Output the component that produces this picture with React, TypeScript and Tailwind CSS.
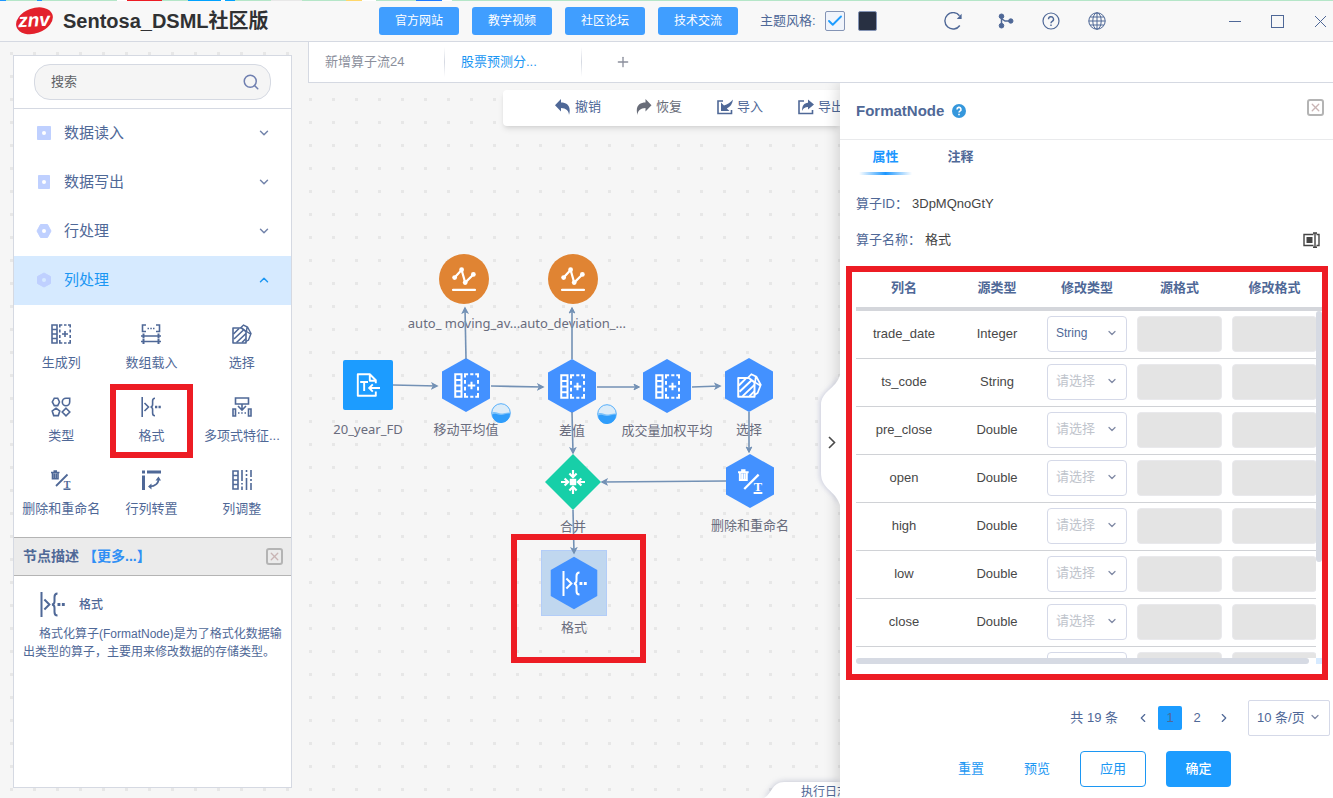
import { useState } from "react";
import type { ReactNode } from "react";
import { Check, ChevronDown, ChevronLeft, ChevronRight, ChevronUp, Plus, Search as SearchIcon, X } from "lucide-react";

/* ---------- operator icons, all on a 20x20 grid ---------- */

function Glyph({ children, className = "w-5 h-5" }: { children: ReactNode; className?: string }) {
  return (
    <svg viewBox="0 0 20 20" className={className} fill="none" stroke="currentColor" strokeWidth="1.6">
      {children}
    </svg>
  );
}

function GenColumn({ className }: { className?: string }) {
  return (
    <Glyph className={className}>
      <path d="M1 1h5v18H1zM1 5.5h5M1 10h5M1 14.5h5" />
      <path d="M8.8 3.5V1h2.5M13 1h2.5M17 1h2.200v2.5M8.800 5.500v3M8.800 11v3M19.200 5.500v3M19.200 11v3M8.800 16v3h2.500M13 19h2.500M17 19h2.200v-3" />
      <path d="M11 10h6M14 7v6" />
    </Glyph>
  );
}

function ArrayLoad() {
  return (
    <Glyph>
      <path d="M5 1H1.5v6.5H5M15 1h3.5v6.5H15" />
      <path d="M6.500 4.500H8M9.300 4.500h1.500M12 4.500h1.500" />
      <path d="M0 12h20M0 17.500h20" />
      <path d="M2.500 9.500v5M17.500 9.500v5M2.500 15v5M17.500 15v5" strokeWidth="2" />
    </Glyph>
  );
}

function SelectIcon({ className }: { className?: string }) {
  return (
    <Glyph className={className}>
      <path d="M1 4h8.500L14 7.500V19H1z" strokeLinejoin="round" />
      <path d="M1.500 10L7 4.500M2 15L11.500 6M4.500 18.500L14 9.500M10 18.500l4-4" />
      <path d="M8.500 4l3-3L15.500 3l3.500 6.500-2.500 6.500-2.500 1.500M15 3l-.5 4.500 4 2.500" strokeWidth="1.4" />
    </Glyph>
  );
}

function TypeIcon() {
  return (
    <Glyph>
      <path d="M3.3 1.2h3.400L8.500 5 6.700 8.600H3.300L1.300 5z" />
      <path d="M15 1.300h3.700V5A3.700 3.700 0 1 1 15 1.300z" />
      <path d="M5 11.200l3.800 2.900-1.500 4.500H2.700l-1.500-4.500z" />
      <path d="M15 11.200l3.800 3.800-3.800 3.800-3.800-3.800z" />
    </Glyph>
  );
}

function FormatIcon({ className }: { className?: string }) {
  return (
    <Glyph className={className}>
      <path d="M1.200 0v20M3.500 6l4 4-4 4" />
      <path d="M14 1.200c-2 0-2.400 1-2.400 2.800v3.500c0 1.500-.6 2.300-2 2.500 1.400.2 2 1 2 2.500V16c0 1.800.4 2.800 2.400 2.800" />
      <path d="M14 10h2.300M17.500 10h2.300" strokeWidth="2.400" />
    </Glyph>
  );
}

function Polynomial() {
  return (
    <Glyph>
      <path d="M3.500 1h13v6h-13z" />
      <path d="M10 7v5M6 9l4 4 4-4" />
      <path d="M1 12h2.500v7H1zM16.500 12H19v7h-2.500z" />
      <path d="M6 16h1.500M9.200 16h1.500M12.500 16H14" />
    </Glyph>
  );
}

function DeleteRename({ className }: { className?: string }) {
  return (
    <Glyph className={className}>
      <path d="M0 2.500h8.500M2.500 1h3.500M1.500 3v5.700h5.500V3M3.300 3.500v5M5.200 3.500v5" />
      <path d="M5 16L16.500 4.500" strokeWidth="1.800" />
      <path d="M12.500 19.200h7" />
      <text
        x="16"
        y="17.5"
        textAnchor="middle"
        fontSize="10"
        fontWeight="700"
        fill="currentColor"
        stroke="none"
        className="font-['Liberation_Serif',serif]"
      >
        T
      </text>
    </Glyph>
  );
}

function Transpose() {
  return (
    <Glyph>
      <path d="M1 2h3M6 2h14" strokeWidth="3" />
      <path d="M2.500 5.500V20" strokeWidth="3" />
      <path d="M17.500 8.500c.5 4.500-3 8-9 8" />
      <path d="M14.500 10.500l3-4 2.500 4zM10.500 13.500L7 16.500l3.500 3z" fill="currentColor" stroke="none" />
    </Glyph>
  );
}

function ColumnAdjust() {
  return (
    <Glyph>
      <path d="M1 1h5v18H1zM1 5.500h5M1 10h5M1 14.500h5" />
      <path d="M10 0v11M10 13v1.500M10 16.500V20M14.500 0v2M14.500 4v2M14.500 8v12M19 0v7M19 9v2M19 13v7" />
    </Glyph>
  );
}

function ChartIcon({ className }: { className?: string }) {
  return (
    <Glyph className={className}>
      <path d="M2 9l6-6.500L11 13l7-7" strokeWidth="1.800" />
      <path d="M.8 19h18.400" strokeWidth="1.800" strokeLinecap="round" />
      <g fill="currentColor" stroke="none">
        <circle cx="2.200" cy="8.800" r="2" />
        <circle cx="8" cy="2.300" r="2" />
        <circle cx="11" cy="13" r="2" />
        <circle cx="17.800" cy="6.200" r="2" />
      </g>
    </Glyph>
  );
}

function FileImport({ className }: { className?: string }) {
  return (
    <Glyph className={className}>
      <path d="M16.500 8.500V6l-5-5H1.500v18h15v-3.500M11.500 1v5.500H17" strokeLinejoin="round" />
      <path d="M3.500 7.500h6.500M6.800 7.500V15M20 12.500h-9M14 9.500l-3 3 3 3" />
    </Glyph>
  );
}

function MergeIcon({ className }: { className?: string }) {
  return (
    <Glyph className={className}>
      <path d="M7.300 7.300h5.400v5.400H7.300z" fill="currentColor" stroke="none" />
      <path d="M0 10h5.500M20 10h-5.500M10 0v5.500M10 20v-5.500" strokeWidth="1.800" />
      <path d="M3 7l3 3-3 3M17 7l-3 3 3 3M7 3l3 3 3-3M7 17l3-3 3 3" strokeWidth="1.800" />
    </Glyph>
  );
}

function CloseBox() {
  return (
    <button aria-label="关闭" className="w-[17px] h-[17px] flex items-center justify-center border-2 border-[#b4b4b4] rounded-[3px]">
      <X className="w-[13px] h-[13px] shrink-0 text-[#c9b4b4]" strokeWidth={2.5} />
    </button>
  );
}

/* ---------- header ---------- */

// sliver of the window behind the app
const strip = [
  "w-[6px] bg-[#1e96ff]",
  "w-[31px] bg-[#b5e6c8]",
  "w-[5px] bg-[#1e96ff]",
  "w-[75px] bg-[#b5e6c8]",
  "w-[10px] bg-white",
  "w-[35px] bg-[#ed1c24]",
  "w-[26px] bg-[#b5e6c8]",
  "w-[33px] bg-[#00a2ff]",
  "w-[4px] bg-white",
  "w-[10px] bg-[#00a2ff]",
  "w-[36px] bg-[#b5e6c8]",
  "w-[31px] bg-[#e8e8e8]",
  "w-[44px] bg-[#b5e6c8]",
  "w-[16px] bg-[#ffd76a]",
  "w-[14px] bg-white",
  "w-[40px] bg-[#b5e6c8]",
  "w-[26px] bg-[#1e7bff]",
  "w-[10px] bg-white",
  "flex-1 bg-[#b5e6c8]",
];

function Logo() {
  return (
    <svg viewBox="0 0 40 32" className="w-10 h-8" aria-label="znv">
      <ellipse cx="20.500" cy="16" rx="19" ry="12.500" fill="#e3212c" transform="rotate(-20 20 16)" />
      <text
        x="20"
        y="21.500"
        textAnchor="middle"
        fontSize="19"
        fontWeight="700"
        fontStyle="italic"
        fill="#fff"
        transform="rotate(-3 20 16)"
      >
        znv
      </text>
    </svg>
  );
}

const links = ["官方网站", "教学视频", "社区论坛", "技术交流"];

function Header() {
  return (
    <header className="shrink-0 bg-[#f8f8f8] border-b border-[#d5d9e2] text-[#4f6897]">
      <div className="flex h-px">
        {strip.map((s, i) => (
          <i key={i} className={s} />
        ))}
      </div>
      <div className="flex items-center h-10 pl-[14px] pr-[6px]">
        <Logo />
        <h1 className="w-[316px] ml-[9px] text-xl font-bold text-[#303133] whitespace-nowrap">Sentosa_DSML社区版</h1>
        <nav className="flex gap-[13px]">
          {links.map((l) => (
            <button key={l} className="w-20 h-7 rounded-[3px] bg-[#409eff] text-white text-xs">
              {l}
            </button>
          ))}
        </nav>
        <span className="ml-[22px] text-[13px]">主题风格:</span>
        <label className="relative ml-[9px] w-5 h-5">
          <input
            type="checkbox"
            defaultChecked
            aria-label="浅色"
            className="block appearance-none w-5 h-5 border border-[#8494b5] rounded-xs bg-[#f0f4fb]"
          />
          <Check className="absolute inset-0 m-auto w-[18px] h-[18px] text-[#1c9cff] pointer-events-none" strokeWidth={2.5} />
        </label>
        <button aria-label="深色" className="ml-[13px] w-[19px] h-5 rounded-xs border border-[#8494b5] bg-[#283042]" />
        <div className="flex items-center gap-7 ml-[67px]">
          <button aria-label="刷新">
            <svg viewBox="0 0 18 18" className="w-[18px] h-[18px]" fill="none" stroke="currentColor" strokeWidth="1.4">
              <path d="M15.500 3.700A8.200 8.200 0 1 0 15.800 13.500" />
              <path d="M17.600 1.800v5.200h-4.800z" fill="currentColor" stroke="none" />
            </svg>
          </button>
          <button aria-label="分支" className="ml-2">
            <svg viewBox="0 0 16 16" className="w-4 h-4" fill="currentColor" stroke="currentColor">
              <path d="M3.500 3.500v9M4 6l3 2h6" fill="none" strokeWidth="1.5" />
              <circle cx="3.500" cy="3.300" r="2.300" />
              <circle cx="3.500" cy="12.700" r="2.300" />
              <circle cx="12.800" cy="8" r="2.200" />
            </svg>
          </button>
          <button aria-label="帮助">
            <svg viewBox="0 0 18 18" className="w-[18px] h-[18px]" fill="none" stroke="currentColor" strokeWidth="1.2">
              <circle cx="9" cy="9" r="8" />
              <path d="M6.500 7.200a2.500 2.500 0 1 1 3.700 2.200C9.300 9.900 9 10.300 9 11.300M9 12.600v1.400" strokeWidth="1.4" />
            </svg>
          </button>
          <button aria-label="语言">
            <svg viewBox="0 0 18 18" className="w-[18px] h-[18px]" fill="none" stroke="currentColor">
              <circle cx="9" cy="9" r="8.200" />
              <ellipse cx="9" cy="9" rx="4.200" ry="8.200" />
              <path d="M9 .8v16.400M.8 9h16.400M2 5h14M2 13h14" />
            </svg>
          </button>
        </div>
        <div className="flex items-center gap-[30px] ml-auto">
          <button aria-label="最小化" className="w-3 h-px bg-[#4f6897]" />
          <button aria-label="最大化" className="w-[13px] h-[13px] border border-[#4f6897]" />
          <button aria-label="关闭窗口">
            <svg viewBox="0 0 13 13" className="w-[13px] h-[13px]" stroke="currentColor">
              <path d="M1 1l11 11M12 1L1 12" />
            </svg>
          </button>
        </div>
      </div>
    </header>
  );
}

/* ---------- left palette ---------- */

const groups = [
  { name: "数据读入", shape: "M1.500 1.500h13v13h-13z" },
  { name: "数据写出", shape: "M2.500 1.500h11v13h-11z" },
  { name: "行处理", shape: "M4.500 1.500h7L15 8l-3.500 6.500h-7L1 8z" },
  { name: "列处理", shape: "M8 1l6.500 3.500v7L8 15l-6.500-3.500v-7z" },
];

const operators = [
  { name: "生成列", icon: <GenColumn /> },
  { name: "数组载入", icon: <ArrayLoad /> },
  { name: "选择", icon: <SelectIcon /> },
  { name: "类型", icon: <TypeIcon /> },
  { name: "格式", icon: <FormatIcon />, marked: true },
  { name: "多项式特征...", icon: <Polynomial /> },
  { name: "删除和重命名", icon: <DeleteRename /> },
  { name: "行列转置", icon: <Transpose /> },
  { name: "列调整", icon: <ColumnAdjust /> },
];

function Sidebar() {
  const [open, setOpen] = useState("列处理");
  return (
    <aside className="flex flex-col shrink-0 w-[279px] mt-[13px] mb-[10px] ml-[13px] mr-4 bg-white border border-[#d5d9e2] text-[#4f6897]">
      <div className="px-5 py-2 border-b border-[#d5d9e2]">
        <label className="flex items-center h-9 px-4 rounded-2xl border border-[#d5d9e2] bg-[#f5f5f5]">
          <input
            type="text"
            placeholder="搜索"
            aria-label="搜索"
            className="flex-1 min-w-0 outline-0 text-[13px] placeholder:text-[#606266]"
          />
          <SearchIcon className="w-[18px] h-[18px] -mr-1.5 text-[#6f7fb0]" strokeWidth={2} />
        </label>
      </div>
      {groups.map((g) => {
        const active = g.name === open;
        return (
          <button
            key={g.name}
            onClick={() => setOpen(active ? "" : g.name)}
            className={
              active
                ? "flex items-center h-[49px] pl-[22px] pr-5 pb-px bg-[#d6eaff] text-[#1c97f3] text-[15px]"
                : "flex items-center h-[49px] pl-[22px] pr-5 pb-px text-[15px]"
            }
          >
            <svg viewBox="0 0 16 16" className="w-4 h-4 mr-3">
              <path d={g.shape} fill="#bfd0ff" stroke="#bfd0ff" strokeWidth="1" strokeLinejoin="round" />
              <circle cx="8" cy="8" r="2" fill={active ? "#d6eaff" : "#fff"} />
            </svg>
            {g.name}
            {active ? (
              <ChevronUp className="w-[14px] h-[14px] ml-auto" strokeWidth={2.5} />
            ) : (
              <ChevronDown className="w-[14px] h-[14px] ml-auto text-[#7384ab]" strokeWidth={2.5} />
            )}
          </button>
        );
      })}
      <div className="grid grid-cols-3 pl-0.5 pr-1 pt-1.5 pb-[7px]">
        {operators.map((o) => (
          <button key={o.name} className="relative flex flex-col items-center h-[73px] pt-[13px] text-[13px] whitespace-nowrap">
            {o.icon}
            <span className="mt-[9px] leading-5">{o.name}</span>
            {o.marked && <i className="absolute inset-x-1 top-0 -bottom-px border-6 border-[#ed1c24]" />}
          </button>
        ))}
      </div>
      <div className="flex items-center justify-between h-[39px] pl-[9px] pr-2 border-y border-[#b4b4b4] bg-[#ebebeb]">
        <p className="pb-px text-sm font-bold">
          节点描述
          <a href="#more" className="ml-1 text-[#2f8ff5]">
            【更多...】
          </a>
        </p>
        <CloseBox />
      </div>
      <div className="pl-[9px] pr-1.5 pt-4 text-xs">
        <div className="flex items-center gap-[14px] pl-[17px] font-medium">
          <FormatIcon className="w-[25px] h-[25px]" />
          格式
        </div>
        <p className="mt-2 leading-[18px] indent-4">
          格式化算子(FormatNode)是为了格式化数据输出类型的算子，主要用来修改数据的存储类型。
        </p>
      </div>
    </aside>
  );
}

/* ---------- canvas ---------- */

type FlowNode = { x: number; y: number; label: string; kind: string; icon: ReactNode; badge?: boolean; selected?: boolean };

const nodes: FlowNode[] = [
  { x: 156, y: 196, label: "auto_ moving_av...", kind: "circle", icon: <ChartIcon className="w-6 h-6" /> },
  { x: 265, y: 196, label: "auto_deviation_...", kind: "circle", icon: <ChartIcon className="w-6 h-6" /> },
  { x: 60, y: 302, label: "20_year_FD", kind: "square", icon: <FileImport className="w-6 h-6" /> },
  { x: 158, y: 302, label: "移动平均值", kind: "hex", icon: <GenColumn className="w-[25px] h-[25px]" />, badge: true },
  { x: 264, y: 303, label: "差值", kind: "hex", icon: <GenColumn className="w-[25px] h-[25px]" />, badge: true },
  { x: 359, y: 303, label: "成交量加权平均", kind: "hex", icon: <GenColumn className="w-[25px] h-[25px]" /> },
  { x: 441, y: 302, label: "选择", kind: "hex", icon: <SelectIcon className="w-[25px] h-[25px]" /> },
  { x: 442, y: 398, label: "删除和重命名", kind: "hex", icon: <DeleteRename className="w-[25px] h-[25px]" /> },
  { x: 265, y: 399, label: "合并", kind: "diamond", icon: <MergeIcon className="w-6 h-6" /> },
  { x: 266, y: 500, label: "格式", kind: "hex", icon: <FormatIcon className="w-[25px] h-[25px]" />, selected: true },
];

const edges = [
  "M85 302L129 303",
  "M158 276L157 225",
  "M183 303L235 304",
  "M264 276L264 225",
  "M289 304L331 304",
  "M384 304L412 303",
  "M441 329L441 369",
  "M418 398L294 399",
  "M264 329L265 370",
  "M265 427L266 470",
];

function NodeShape({ kind }: { kind: string }) {
  return (
    <svg viewBox="0 0 66 66" className="absolute inset-0 w-full h-full">
      {kind === "circle" && <circle cx="33" cy="33" r="25" fill="#e08433" />}
      {kind === "square" && <rect x="8" y="8" width="50" height="50" rx="2" fill="#1c9cff" />}
      {kind === "hex" && <path d="M33 6l24 13.500v27L33 60 9 46.500v-27z" fill="#4391ff" />}
      {kind === "diamond" && <path d="M33 5l28 28-28 28L5 33z" fill="#17cfa8" />}
    </svg>
  );
}

function Progress() {
  return (
    <svg viewBox="0 0 20 20" className="absolute left-[58px] top-[51px] w-5 h-5">
      <circle cx="10" cy="10" r="9.300" fill="#dcecf8" stroke="#2f9dfb" strokeWidth="0.8" />
      <path d="M1 9.500c4-1.500 6 1 9 1s6-1.500 9-1A9 9 0 0 1 1 9.500z" fill="#7cc2fa" />
      <path d="M1 11.500c4-2 6 .5 9 .5s6-2 9-1.500A9 9 0 0 1 1 11.500z" fill="#2f9dfb" />
    </svg>
  );
}

const actions = [
  {
    name: "撤销",
    icon: <path d="M6 0v3.500c6 0 10.500 3.500 8 12.500 0-4-3-7-8-7v3.500L0 6.200z" fill="currentColor" />,
  },
  {
    name: "恢复",
    icon: <path d="M9.500 0v3.500c-6 0-10.500 3.500-8 12.500 0-4 3-7 8-7v3.500l6-6.300z" fill="currentColor" />,
  },
  {
    name: "导入",
    icon: (
      <>
        <path d="M6 2H1v12.500h13.500V11" fill="none" stroke="currentColor" strokeWidth="1.6" />
        <path d="M4 3.500V12h8.500l-2.700-2.500C13 8 15.500 5 16 .5 13.500 3.500 10.500 5.500 7 6.500z" fill="currentColor" />
      </>
    ),
  },
  {
    name: "导出",
    icon: (
      <>
        <path d="M6 2H1v12.500h13.500V11" fill="none" stroke="currentColor" strokeWidth="1.6" />
        <path d="M10 .5l6 5-6 5V8c-3 0-4.500 1-6 4 0-5.500 2-8 6-8.300z" fill="currentColor" />
      </>
    ),
  },
];

function Canvas() {
  return (
    <section className="relative flex-1 min-w-0 overflow-hidden">
      <div className="flex gap-[35px] h-9 mt-[7px] ml-[195px] pl-[52px] pb-0.5 bg-white rounded-l-sm shadow-md">
        {actions.map((a) => (
          <button
            key={a.name}
            className={
              a.name === "恢复"
                ? "flex items-center shrink-0 gap-1 text-[13px] text-[#686c78]"
                : "flex items-center shrink-0 gap-1 text-[13px] text-[#4f6897]"
            }
          >
            <svg viewBox="0 0 16 16" className="w-4 h-4">
              {a.icon}
            </svg>
            {a.name}
          </button>
        ))}
      </div>

      {nodes.map((n, i) => (
        <div key={i} className="absolute flex flex-col items-center w-[66px]" style={{ left: n.x - 33, top: n.y - 33 }}>
          <div
            className={
              n.selected
                ? "relative flex items-center justify-center w-[66px] h-[66px] bg-[#c0d7ef] border border-[#b3cdf8] text-white"
                : "relative flex items-center justify-center w-[66px] h-[66px] text-white"
            }
          >
            <NodeShape kind={n.kind} />
            <span className="relative">{n.icon}</span>
            {n.badge && <Progress />}
          </div>
          <span className="mt-0.5 text-[13px] leading-[18px] whitespace-nowrap text-[#696c7d] font-['Noto_Sans','Noto_Sans_CJK_SC',sans-serif]">
            {n.label}
          </span>
        </div>
      ))}

      <svg className="absolute inset-0 w-full h-full pointer-events-none" fill="none" stroke="#7391b5" strokeWidth="1.6">
        <defs>
          <marker id="arrow" markerUnits="userSpaceOnUse" markerWidth="8" markerHeight="8" refX="6" refY="4" orient="auto">
            <path d="M1 1.200L6.500 4 1 6.800 2.500 4z" fill="#7391b5" stroke="#7391b5" strokeWidth="1" />
          </marker>
        </defs>
        {edges.map((d) => (
          <path key={d} d={d} markerEnd="url(#arrow)" />
        ))}
      </svg>

      <i className="absolute left-[203px] top-[451px] w-[135px] h-[129px] border-6 border-[#ed1c24]" />

      <button className="absolute right-0 bottom-0 w-[76px] h-[17px] text-xs text-[#4f6897]">
        <svg viewBox="0 0 76 17" className="absolute inset-0 w-full h-full overflow-visible drop-shadow-[0_0_3px_rgba(100,110,150,0.4)]">
          <path d="M0 17C8 13 8 1 20 1H76V17z" fill="#fff" />
        </svg>
        <span className="absolute left-[37px] top-0.5 leading-[18px] whitespace-nowrap">执行日志</span>
      </button>
    </section>
  );
}

/* ---------- property panel ---------- */

const columns = [
  { name: "trade_date", type: "Integer", target: "String" },
  { name: "ts_code", type: "String" },
  { name: "pre_close", type: "Double" },
  { name: "open", type: "Double" },
  { name: "high", type: "Double" },
  { name: "low", type: "Double" },
  { name: "close", type: "Double" },
  { name: "", type: "" },
];

function TypeSelect({ value = "", label }: { value?: string; label: string }) {
  return (
    <div className="relative w-20 mx-auto">
      <select
        aria-label={label}
        defaultValue={value}
        className={
          value
            ? "block appearance-none w-20 h-9 pl-2 pb-0.5 rounded-sm border border-[#d5d9e8] bg-white text-xs text-[#4f6897]"
            : "block appearance-none w-20 h-9 pl-2 pb-0.5 rounded-sm border border-[#d5d9e8] bg-white text-[13px] text-[#c0c4cc]"
        }
      >
        <option value="">请选择</option>
        <option>String</option>
      </select>
      <ChevronDown className="absolute right-[9px] top-[11px] w-3 h-3 text-[#808aa5] pointer-events-none" strokeWidth={2.5} />
    </div>
  );
}

function FormatTable() {
  return (
    <div className="relative h-[414px] mt-2 ml-1.5 mr-[5px] border-6 border-[#ed1c24]">
      <div className="h-[386px] ml-1 overflow-hidden">
        <table className="w-full table-fixed border-collapse text-[13px] text-center text-[#484848]">
          <colgroup>
            <col />
            <col className="w-[90px]" />
            <col className="w-[90px]" />
            <col className="w-[95px]" />
            <col className="w-[95px]" />
          </colgroup>
          <thead>
            <tr className="h-[39px] text-[#4f6897] shadow-[inset_0_-4px_0_#d4d6db]">
              <th className="pb-2">列名</th>
              <th className="pb-2">源类型</th>
              <th className="pb-2">修改类型</th>
              <th className="pb-2">源格式</th>
              <th className="pb-2">修改格式</th>
            </tr>
          </thead>
          <tbody>
            {columns.map((c, i) => (
              <tr key={i} className="h-12 shadow-[inset_0_-1px_0_#d0d2d6]">
                <td className="pb-0.5">{c.name}</td>
                <td className="pb-0.5">{c.type}</td>
                <td className="pb-0.5">
                  <TypeSelect value={c.target} label={"修改类型 " + c.name} />
                </td>
                <td className="px-[5px] pb-0.5">
                  <input disabled aria-label="源格式" className="block w-full h-9 rounded-sm border border-[#e9e9ec] bg-[#e4e4e4]" />
                </td>
                <td className="px-[5px] pb-0.5">
                  <input disabled aria-label="修改格式" className="block w-full h-9 rounded-sm border border-[#e9e9ec] bg-[#e4e4e4]" />
                </td>
              </tr>
            ))}
          </tbody>
        </table>
      </div>
      {/* scrollbars */}
      <div className="absolute right-0 top-[39px] bottom-4 w-1.5 bg-white">
        <div className="h-[251px] rounded-full bg-[#d6dae3]" />
      </div>
      <div className="flex justify-between ml-1">
        <div className="w-[453px] h-1.5 rounded-full bg-[#d6dae3]" />
        <div className="w-1.5 h-1.5 bg-[#d6eaff]" />
      </div>
    </div>
  );
}

function Panel() {
  return (
    <section className="relative shrink-0 w-[493px] bg-white text-[13px] text-[#4f6897] shadow-[-2px_0_14px_rgba(0,0,0,0.16)]">
      <button aria-label="收起" className="absolute -left-[19px] top-[290px] w-5 h-[134px]">
        <svg viewBox="0 0 20 134" className="w-5 h-[134px] overflow-visible">
          <path
            d="M19 2C15 16 0 18 0 32V100C0 116 15 118 19 132"
            fill="#fff"
            className="drop-shadow-[-2px_0_2px_rgba(110,120,170,0.25)]"
          />
          <path d="M19 2h1v130h-1z" fill="#fff" />
          <path d="M8 64l5.500 5.500L8 75" fill="none" stroke="#4a4a4a" strokeWidth="1.6" />
        </svg>
      </button>

      <div className="flex justify-between h-[57px] pt-4 pl-4 pr-[9px] border-b border-[#e9eaec]">
        <h2 className="flex items-center gap-2 h-6 text-[15px] font-bold">
          FormatNode
          <svg viewBox="0 0 14 14" className="w-[14px] h-[14px]">
            <circle cx="7" cy="7" r="7" fill="#3597dc" />
            <path d="M5 5.400a2 2 0 1 1 3 1.700c-.7.4-1 .7-1 1.500M7 9.700v1.500" fill="none" stroke="#fff" strokeWidth="1.6" />
          </svg>
        </h2>
        <CloseBox />
      </div>

      <div className="flex gap-[22px] pl-[19px] h-[35px] font-bold">
        <button className="relative w-[53px] pb-px text-[#1c97ff]">
          属性
          <i className="absolute left-0 bottom-0 w-full h-[3px] bg-linear-to-r from-transparent via-[#1c97ff] to-transparent" />
        </button>
        <button className="w-[53px] pb-px">注释</button>
      </div>

      <dl className="pl-4 pr-[13px] pt-[11px]">
        <div className="flex items-center gap-1 h-9 pb-px">
          <dt>算子ID：</dt>
          <dd className="text-[#444]">3DpMQnoGtY</dd>
        </div>
        <div className="flex items-center gap-1 h-9 pb-px">
          <dt>算子名称：</dt>
          <dd className="text-[#444]">格式</dd>
          <button aria-label="重命名" className="ml-auto text-[#444]">
            <svg viewBox="0 0 18 16" className="w-[18px] h-4" fill="none" stroke="currentColor" strokeWidth="1.4">
              <path d="M11.500 2.500H2v11h9.500M14.500 2.500H17v11h-2.500M11 1h4M11 15.300h4M13 1v14" />
              <path d="M4.500 5h6v6h-6z" fill="currentColor" stroke="none" />
            </svg>
          </button>
        </div>
      </dl>

      <FormatTable />

      <div className="flex items-center justify-end h-9 mt-5 pr-[3px]">
        <span>共 19 条</span>
        <button aria-label="上一页" className="ml-[18px]">
          <ChevronLeft className="w-[14px] h-[14px]" />
        </button>
        <button className="w-6 h-6 ml-2 rounded-xs bg-[#1c9cff]">1</button>
        <button className="w-6 h-6 ml-[3px]">2</button>
        <button aria-label="下一页" className="ml-2">
          <ChevronRight className="w-[14px] h-[14px]" />
        </button>
        <div className="relative ml-[17px]">
          <select aria-label="每页条数" className="block appearance-none w-[82px] h-9 pl-2 rounded-xs border border-[#d5d9e8] bg-white">
            <option>10 条/页</option>
            <option>20 条/页</option>
          </select>
          <ChevronDown className="absolute right-[9px] top-[11px] w-3 h-3 text-[#808aa5] pointer-events-none" strokeWidth={2.5} />
        </div>
      </div>

      <div className="flex justify-end h-9 mt-[15px] pr-[102px] text-[#1c97f3]">
        <button className="w-[66px]">重置</button>
        <button className="w-[66px]">预览</button>
        <button className="w-[66px] ml-[10px] rounded-sm border border-[#1c97f3]">应用</button>
        <button className="w-[65px] ml-5 rounded-sm bg-[#1c9cff] text-white font-medium">确定</button>
      </div>
    </section>
  );
}

function Tabs() {
  return (
    <div className="flex items-center shrink-0 h-[41px] bg-white border-l border-b border-[#d5d9e2] text-[13px] text-[#8b8f9c]">
      <button className="w-[135px] pl-4 text-left">新增算子流24</button>
      <i className="w-px h-[30px] bg-linear-to-b from-transparent via-[#d5d9e2] to-transparent" />
      <button className="w-[136px] pl-4 text-left text-[#1c97f3]">股票预测分...</button>
      <i className="w-px h-[30px] bg-linear-to-b from-transparent via-[#d5d9e2] to-transparent" />
      <button aria-label="新增" className="ml-[33px]">
        <Plus className="w-4 h-4" strokeWidth={2} />
      </button>
    </div>
  );
}

export default function App() {
  return (
    <div className="flex flex-col h-screen overflow-hidden font-['Liberation_Sans','Noto_Sans_CJK_SC',sans-serif]">
      <Header />
      <main className="flex flex-1 min-h-0 bg-[#f6f6f6] bg-[radial-gradient(circle,#e7e7e7_1.5px,transparent_2px)] bg-size-[23px_23px]">
        <Sidebar />
        <div className="flex flex-col flex-1 min-w-0">
          <Tabs />
          <div className="flex flex-1 min-h-0 overflow-hidden">
            <Canvas />
            <Panel />
          </div>
        </div>
      </main>
    </div>
  );
}
